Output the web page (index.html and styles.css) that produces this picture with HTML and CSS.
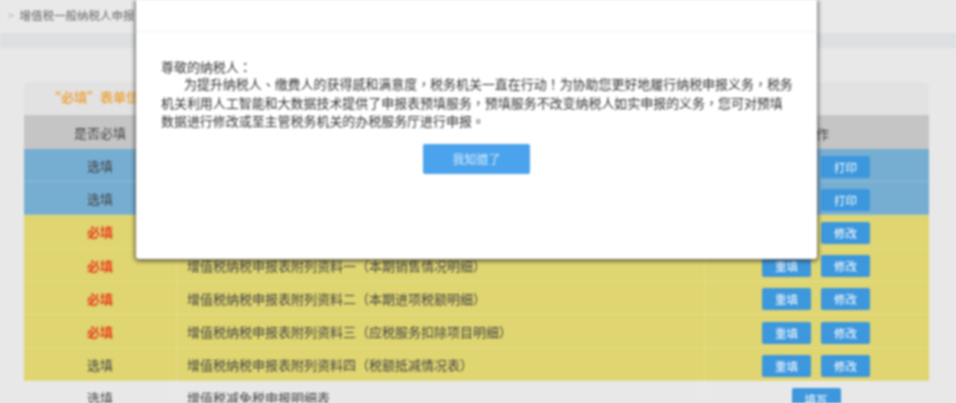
FILE: index.html
```html
<!DOCTYPE html>
<html lang="zh-CN">

<head>
  <meta charset="utf-8">
  <title>增值税一般纳税人申报</title>
  <link rel="stylesheet" href="styles.css">
</head>

<body>
  <div class="page">
    <div class="topbar"><span class="crumb-sep">&gt;</span>增值税一般纳税人申报</div>
    <div class="band"></div>

    <div class="card">
      <div class="card-title">“必填”表单信息</div>
      <div class="row head">
        <div class="col-need">是否必填</div>
        <div class="col-name"></div>
        <div class="col-ops">操作</div>
      </div>
      <div class="row blue">
        <div class="col-need">选填</div>
        <div class="col-name"></div>
        <div class="col-ops"><span class="btn"></span><span class="btn">打印</span></div>
      </div>
      <div class="row blue">
        <div class="col-need">选填</div>
        <div class="col-name"></div>
        <div class="col-ops"><span class="btn"></span><span class="btn">打印</span></div>
      </div>
      <div class="row yellow">
        <div class="col-need must">必填</div>
        <div class="col-name"></div>
        <div class="col-ops"><span class="btn"></span><span class="btn">修改</span></div>
      </div>
      <div class="row yellow">
        <div class="col-need must">必填</div>
        <div class="col-name">增值税纳税申报表附列资料一（本期销售情况明细）</div>
        <div class="col-ops"><span class="btn">重填</span><span class="btn">修改</span></div>
      </div>
      <div class="row yellow">
        <div class="col-need must">必填</div>
        <div class="col-name">增值税纳税申报表附列资料二（本期进项税额明细）</div>
        <div class="col-ops"><span class="btn">重填</span><span class="btn">修改</span></div>
      </div>
      <div class="row yellow">
        <div class="col-need must">必填</div>
        <div class="col-name">增值税纳税申报表附列资料三（应税服务扣除项目明细）</div>
        <div class="col-ops"><span class="btn">重填</span><span class="btn">修改</span></div>
      </div>
      <div class="row yellow">
        <div class="col-need">选填</div>
        <div class="col-name">增值税纳税申报表附列资料四（税额抵减情况表）</div>
        <div class="col-ops"><span class="btn">重填</span><span class="btn">修改</span></div>
      </div>
      <div class="row plain">
        <div class="col-need">选填</div>
        <div class="col-name">增值税减免税申报明细表</div>
        <div class="col-ops"><span class="btn">填写</span></div>
      </div>
    </div>

    <div class="dialog">
      <div class="dialog-head"></div>
      <div class="dialog-body">
        <p class="greeting">尊敬的纳税人：</p>
        <p class="notice">为提升纳税人、缴费人的获得感和满意度，税务机关一直在行动！为协助您更好地履行纳税申报义务，税务<br>机关利用人工智能和大数据技术提供了申报表预填服务，预填服务不改变纳税人如实申报的义务，您可对预填<br>数据进行修改或至主管税务机关的办税服务厅进行申报。</p>
        <div class="dialog-actions"><span class="ok-btn">我知道了</span></div>
      </div>
    </div>
  </div>
</body>

</html>
```

FILE: styles.css
```css
html,
body {
  margin: 0;
  height: 100%;
  overflow: hidden;
  background-color: #e8e8e8;
}

.page {
  position: relative;
  width: 956px;
  height: 403px;
  overflow: hidden;
  background-color: #e8e8e8;
  font-family: "Noto Sans CJK TC", "Liberation Sans", sans-serif;
  /* centered punctuation, as in the reference */
  font-feature-settings: "locl" 0;
  font-size: 13px;
  color: #444;
  filter: blur(0.8px);
}

.topbar {
  height: 33px;
  line-height: 31px;
  padding-left: 20px;
  font-size: 11.5px;
  color: #666;
  background-color: #e9e9e9;
}

.crumb-sep {
  margin-left: -12px;
  margin-right: 5px;
  color: #bbb;
}

.band {
  height: 15px;
  background-color: #dddfe1;
}

.card {
  width: 905px;
  margin: 34px 0 0 24px;
  border-radius: 6px 6px 0 0;
  background-color: #e2e2e2;
}

.card-title {
  height: 33px;
  line-height: 30px;
  padding-left: 24px;
  color: #eba94c;
  font-weight: bold;
}

.row {
  display: flex;
  height: 33.2px;
  line-height: 33px;
  box-sizing: border-box;
  border-bottom: 1px solid rgba(255, 255, 255, 0.18);
}

.col-need {
  width: 152px;
  text-align: center;
  border-right: 1px solid rgba(255, 255, 255, 0.18);
}

.col-name {
  width: 528px;
  padding-left: 10px;
  box-sizing: border-box;
  border-right: 1px solid rgba(255, 255, 255, 0.18);
}

.col-ops {
  width: 224px;
  display: flex;
  justify-content: center;
  align-items: center;
  gap: 10px;
  padding: 3px 2px 0 0;
  box-sizing: border-box;
}

.head {
  height: 34px;
  line-height: 35px;
  background-color: #c5c5c5;
  border-bottom: 0;
}

.blue {
  background-color: #76aed2;
}

.yellow {
  background-color: #dfd571;
}

.plain {
  background-color: #e8e8e8;
}

.must {
  color: #e8401c;
  font-weight: bold;
}

.btn {
  width: 49px;
  height: 22px;
  line-height: 22px;
  text-align: center;
  font-size: 11.5px;
  color: #fff;
  border-radius: 2px;
  background-color: #3d97dd;
}

.dialog {
  position: absolute;
  top: 0;
  left: 136px;
  width: 681px;
  height: 259px;
  background-color: #fff;
  border-radius: 0 0 3px 3px;
  box-shadow: 0 1px 4px 1px rgba(40, 40, 40, 0.75);
}

.dialog-head {
  height: 31px;
  border-bottom: 1px solid #f3f3f3;
}

.dialog-body {
  padding: 26px 25px 0;
  line-height: 18.3px;
  font-size: 12.96px;
  color: #333;
}

.greeting,
.notice {
  margin: 0;
}

.greeting {
  line-height: 17.3px;
}

.notice {
  text-indent: 23px;
  white-space: nowrap;
}

.dialog-actions {
  display: flex;
  justify-content: center;
  margin-top: 14px;
}

.ok-btn {
  width: 107px;
  height: 30px;
  line-height: 30px;
  text-align: center;
  font-size: 12px;
  color: #dcefff;
  border-radius: 2px;
  background-color: #4aa3ec;
}
```
